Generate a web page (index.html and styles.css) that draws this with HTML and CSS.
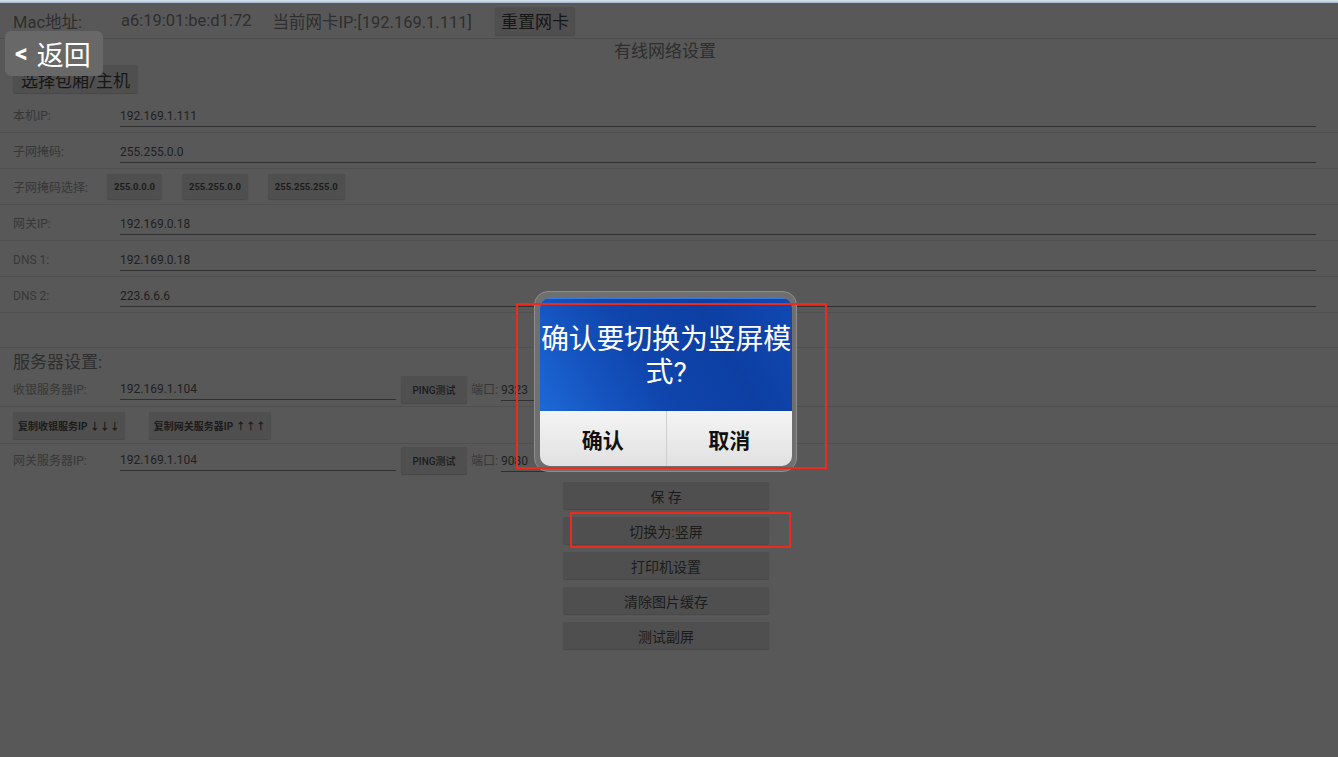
FILE: index.html
```html
<!DOCTYPE html>
<html lang="zh-CN">
<head>
    <meta charset="UTF-8">
    <meta name="viewport" content="width=device-width, initial-scale=1.0">
    <title>有线网络设置</title>
    <link rel="stylesheet" href="styles.css">
</head>
<body>
    <div class="screen">
        <div class="top-strip"></div>

        <header class="topbar">
            <span class="mac-label">Mac地址:</span>
            <span class="mac-value">a6:19:01:be:d1:72</span>
            <span class="nic-ip">当前网卡IP:[192.169.1.111]</span>
            <button class="btn btn-big">重置网卡</button>
        </header>

        <div class="page-title">有线网络设置</div>

        <div class="choose-row">
            <button class="btn btn-big btn-choose">选择包厢/主机</button>
        </div>

        <div class="form-row">
            <span class="label">本机IP:</span>
            <div class="field">192.169.1.111</div>
        </div>
        <div class="form-row">
            <span class="label">子网掩码:</span>
            <div class="field">255.255.0.0</div>
        </div>
        <div class="form-row mask-row">
            <span class="label label-auto">子网掩码选择:</span>
            <div class="mask-buttons">
                <button class="btn btn-small">255.0.0.0</button>
                <button class="btn btn-small">255.255.0.0</button>
                <button class="btn btn-small">255.255.255.0</button>
            </div>
        </div>
        <div class="form-row">
            <span class="label">网关IP:</span>
            <div class="field">192.169.0.18</div>
        </div>
        <div class="form-row">
            <span class="label">DNS 1:</span>
            <div class="field">192.169.0.18</div>
        </div>
        <div class="form-row">
            <span class="label">DNS 2:</span>
            <div class="field">223.6.6.6</div>
        </div>
        <div class="form-row empty-row"></div>

        <div class="section-title">服务器设置:</div>

        <div class="server-row">
            <span class="label">收银服务器IP:</span>
            <div class="field server-field">192.169.1.104</div>
            <button class="btn btn-ping">PING测试</button>
            <span class="port-label">端口:</span>
            <div class="field port-field">9323</div>
        </div>
        <div class="copy-row">
            <button class="btn btn-small btn-copy">复制收银服务IP ↓↓↓</button>
            <button class="btn btn-small btn-copy">复制网关服务器IP ↑↑↑</button>
        </div>
        <div class="server-row last">
            <span class="label">网关服务器IP:</span>
            <div class="field server-field">192.169.1.104</div>
            <button class="btn btn-ping">PING测试</button>
            <span class="port-label">端口:</span>
            <div class="field port-field">9080</div>
        </div>

        <div class="actions">
            <button class="btn btn-action">保 存</button>
            <button class="btn btn-action">切换为:竖屏</button>
            <button class="btn btn-action">打印机设置</button>
            <button class="btn btn-action">清除图片缓存</button>
            <button class="btn btn-action">测试副屏</button>
        </div>

        <a href="#" class="back-button"><span class="back-arrow">&lt;</span><span>返回</span></a>

        <div class="dialog">
            <div class="dialog-inner">
                <div class="dialog-message">确认要切换为竖屏模式?</div>
                <div class="dialog-buttons">
                    <button class="dialog-btn">确认</button>
                    <button class="dialog-btn">取消</button>
                </div>
            </div>
        </div>

        <div class="mark mark-dialog"></div>
        <div class="mark mark-switch"></div>
    </div>
</body>
</html>
```

FILE: styles.css
```css
body {
    margin: 0;
    padding: 0;
    background-color: #585858;
    font-family: Roboto, "Noto Sans CJK SC", sans-serif;
    color: #1f1f1f;
}
.screen {
    position: relative;
    width: 1338px;
    height: 757px;
    overflow: hidden;
    background-color: #585858;
}
.top-strip {
    height: 3px;
    background: linear-gradient(#dde6f1, #a6b7cf);
}
.btn {
    font-family: Roboto, "Noto Sans CJK SC", sans-serif;
    background-color: #4f4f4f;
    border: none;
    border-radius: 2px;
    color: #1b1b1b;
    padding: 0;
    box-shadow: 0 1px 1px rgba(0, 0, 0, 0.18);
}

/* top bar */
.topbar {
    height: 35px;
    border-bottom: 1px solid #4c4c4c;
    display: flex;
    align-items: center;
    padding-left: 13px;
    font-size: 16.5px;
    color: #2e2e2e;
}
.mac-label {
    width: 108px;
}
.mac-value {
    margin-right: 21px;
}
.nic-ip {
    margin-right: 23px;
}
.btn-big {
    font-size: 17px;
    height: 28px;
    padding: 0 6px;
    color: #161616;
}
.btn-choose {
    padding: 0 8px;
}
.page-title {
    height: 26px;
    line-height: 24px;
    text-align: center;
    font-size: 17px;
    color: #2e2e2e;
    padding-right: 8px;
}
.choose-row {
    height: 32px;
    padding-left: 13px;
}

/* network rows */
.form-row {
    height: 35px;
    border-bottom: 1px solid #4f4f4f;
    display: flex;
    align-items: flex-start;
    padding: 0 22px 0 13px;
}
.label {
    width: 107px;
    flex-shrink: 0;
    font-size: 12px;
    line-height: 20px;
    padding-top: 9px;
    color: #373737;
}
.label-auto {
    width: 94px;
}
.field {
    flex: 1;
    margin-top: 9px;
    height: 20px;
    line-height: 20px;
    font-size: 12px;
    color: #1f1f1f;
    border-bottom: 1px solid #303030;
}
.mask-buttons {
    display: flex;
    gap: 20px;
    padding-top: 5px;
}
.btn-small {
    font-size: 9.5px;
    font-weight: bold;
    height: 25px;
    padding: 0 7px;
}
.empty-row {
    height: 34px;
}

/* server settings */
.section-title {
    height: 24px;
    line-height: 28px;
    font-size: 17px;
    padding-left: 13px;
    color: #2e2e2e;
}
.server-row {
    height: 34px;
    border-bottom: 1px solid #4f4f4f;
    display: flex;
    align-items: flex-start;
    padding-left: 13px;
}
.server-row.last {
    border-bottom: none;
    height: 36px;
}
.server-row .label {
    padding-top: 8px;
}
.server-field {
    flex: none;
    width: 276px;
    margin-top: 7px;
}
.server-row.last .label {
    padding-top: 7px;
}
.server-row.last .server-field {
    margin-top: 6px;
}
.btn-ping {
    font-size: 10px;
    font-weight: 500;
    width: 66px;
    height: 27px;
    margin: 4px 4px 0 5px;
}
.server-row.last .btn-ping {
    margin-top: 3px;
}
.port-label {
    font-size: 12px;
    line-height: 20px;
    padding-top: 8px;
    color: #373737;
    width: 30px;
}
.server-row.last .port-label {
    padding-top: 7px;
}
.port-field {
    flex: none;
    width: 110px;
}
.server-row .port-field {
    margin-top: 8px;
}
.server-row.last .port-field {
    margin-top: 7px;
}
.copy-row {
    border-bottom: 1px solid #4f4f4f;
    display: flex;
    align-items: flex-start;
    gap: 24px;
    padding: 5px 0 0 13px;
    box-sizing: border-box;
    height: 37px;
}
.btn-copy {
    height: 27px;
    font-size: 10px;
    padding: 0 5px;
}

/* action buttons */
.actions {
    display: flex;
    flex-direction: column;
    align-items: center;
    gap: 8px;
    padding: 2px 6px 0 0;
}
.btn-action {
    width: 206px;
    height: 27px;
    font-size: 14px;
    color: #1b1b1b;
}

/* floating back button */
.back-button {
    position: absolute;
    left: 5px;
    top: 31px;
    width: 98px;
    height: 45px;
    box-sizing: border-box;
    padding-left: 10px;
    display: flex;
    align-items: center;
    gap: 9px;
    background-color: #686868;
    border-radius: 6px;
    color: #ffffff;
    text-decoration: none;
    font-size: 27px;
}
.back-arrow {
    font-size: 25px;
    font-weight: bold;
}

/* confirm dialog */
.dialog {
    position: absolute;
    left: 534px;
    top: 291px;
    width: 263px;
    height: 181px;
    box-sizing: border-box;
    padding: 6px 4px 5px 5px;
    border: 1px solid #8e8e8e;
    border-radius: 14px;
    background-color: #6f6f6f;
}
.dialog-inner {
    height: 100%;
    border-radius: 10px;
    overflow: hidden;
    display: flex;
    flex-direction: column;
}
.dialog-message {
    height: 113px;
    box-sizing: border-box;
    padding-top: 24px;
    text-align: center;
    font-size: 28px;
    line-height: 33px;
    letter-spacing: -0.2px;
    color: #ffffff;
    border-top: 1px solid #3a7be6;
    background: linear-gradient(60deg, #1d69d6 0%, #1554c0 22%, #0f45ac 42%, #0d3fa3 70%, #1048b2 100%);
}
.dialog-buttons {
    flex: 1;
    display: flex;
}
.dialog-btn {
    flex: 1;
    border: none;
    background: linear-gradient(#f4f4f4, #e1e1e1);
    font-family: Roboto, "Noto Sans CJK SC", sans-serif;
    font-size: 21px;
    font-weight: bold;
    color: #111111;
    padding: 0;
}
.dialog-btn + .dialog-btn {
    border-left: 1px solid #cfcfcf;
}

/* red annotation frames */
.mark {
    position: absolute;
    border: 2px solid #ee2a1f;
}
.mark-dialog {
    left: 516px;
    top: 303px;
    width: 307px;
    height: 162px;
}
.mark-switch {
    left: 570px;
    top: 512px;
    width: 217px;
    height: 32px;
}
```
